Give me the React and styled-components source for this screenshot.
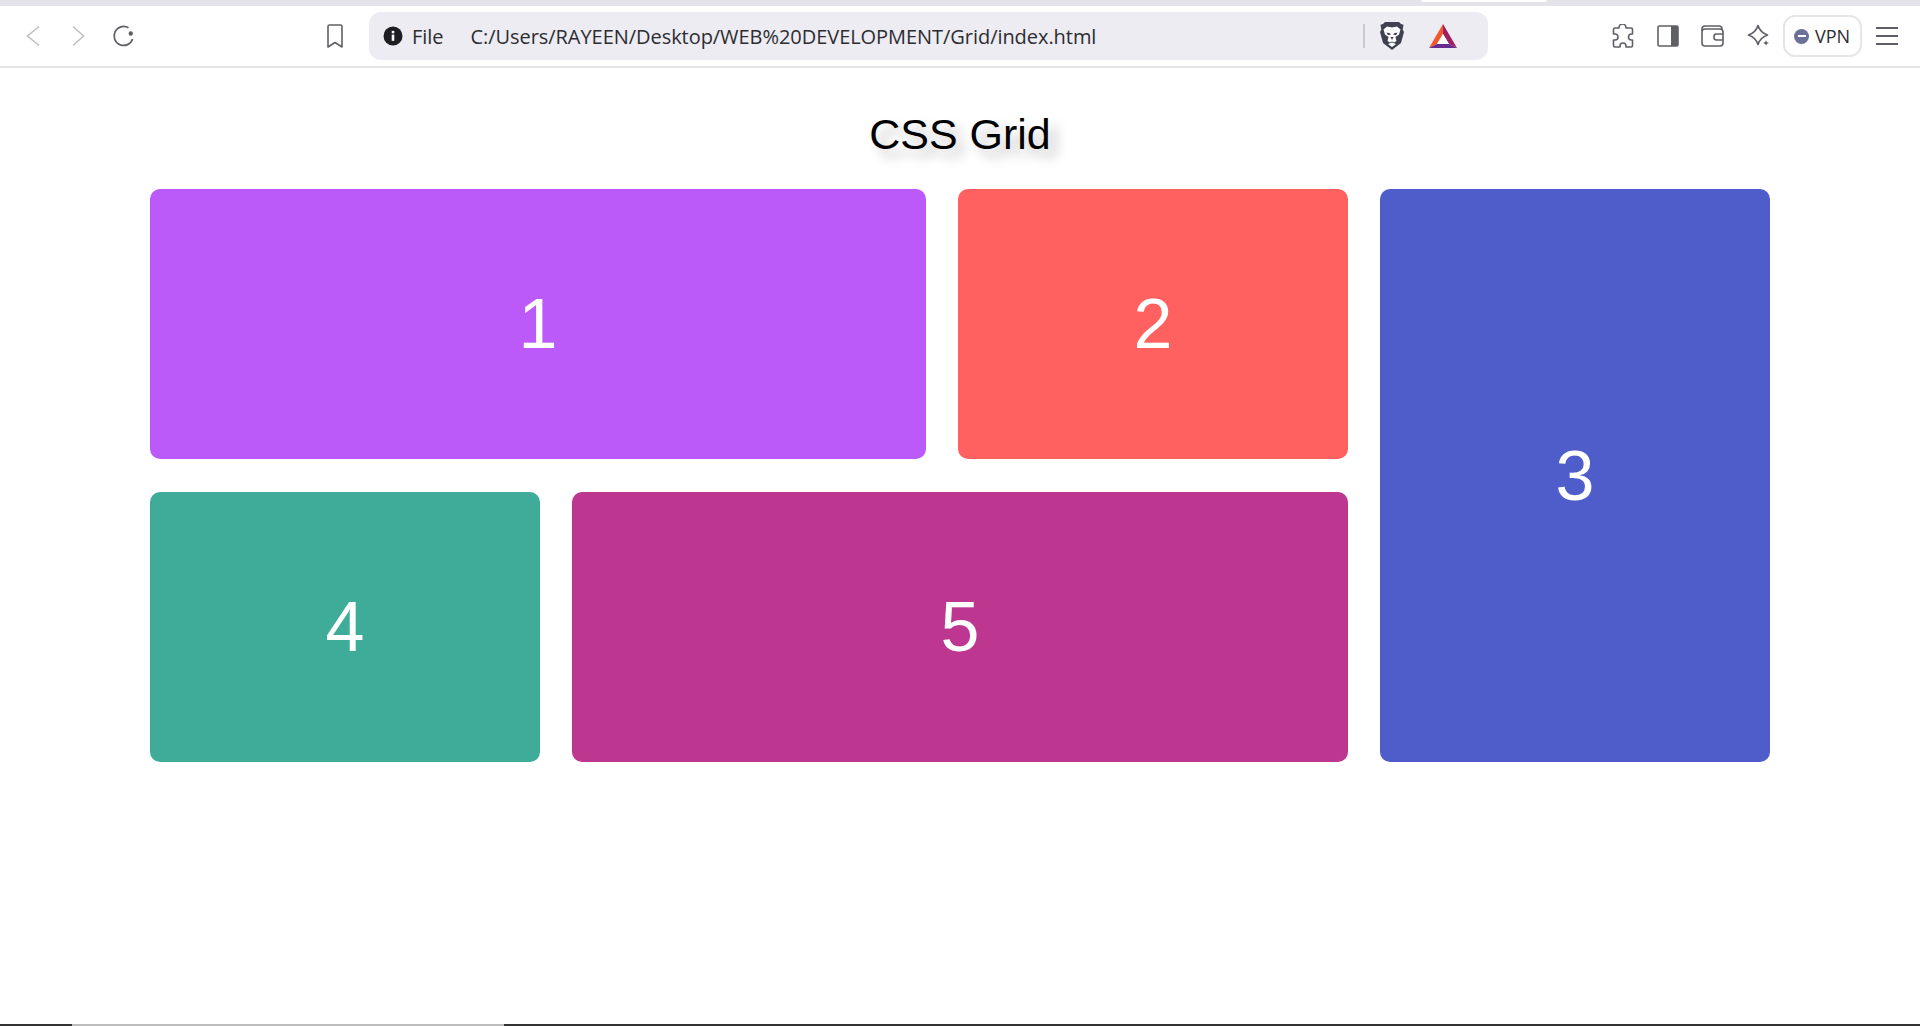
import React from "react";
import styled, { createGlobalStyle } from "styled-components";

const GlobalStyle = createGlobalStyle`
  html, body {
    margin: 0;
    height: 100%;
    background: #fff;
    overflow: hidden;
  }
  #root {
    height: 100%;
  }
`;

const BackIcon = () => (
  <svg width="16" height="24" viewBox="0 0 16 24" fill="none" stroke="#bdbdc2" strokeWidth="1.5">
    <path d="M13 2.500 1.500 12 13 21.500" />
  </svg>
);

const ForwardIcon = () => (
  <svg width="18" height="24" viewBox="0 0 18 24" fill="none" stroke="#bdbdc2" strokeWidth="1.5">
    <path d="M5 2.500 15.500 12 5 21.500" />
  </svg>
);

const ReloadIcon = () => (
  <svg width="24" height="24" viewBox="0 0 24 24" fill="none" stroke="#5f5f66" strokeWidth="1.7">
    <path d="M16.500 3.800A9.500 9.500 0 1 0 20.600 15" />
    <circle cx="18.800" cy="9.500" r="2.200" fill="#5f5f66" stroke="none" />
  </svg>
);

const BookmarkIcon = () => (
  <svg width="18" height="24" viewBox="0 0 18 24" fill="none" stroke="#5f5f66" strokeWidth="1.6" strokeLinejoin="round">
    <path d="M2 2.500A1.500 1.500 0 0 1 3.500 1h11A1.500 1.500 0 0 1 16 2.500V23l-7-4.500L2 23z" />
  </svg>
);

const InfoIcon = () => (
  <svg width="20" height="20" viewBox="0 0 20 20">
    <circle cx="10" cy="10" r="9.500" fill="#1d1d22" />
    <rect x="8.700" y="8.600" width="2.600" height="6.200" fill="#fff" />
    <rect x="8.700" y="4.900" width="2.600" height="2.400" fill="#fff" />
  </svg>
);

const BraveIcon = () => (
  <svg width="24" height="28" viewBox="0 0 24 28">
    <path d="M5 0h14l2 2 2.500.8-.8 5 1.300 2.200-3 11-6.500 5L12 28l-2.500-2-6.500-5-3-11 1.300-2.200-.8-5L3 2z" fill="#3f4150" />
    <path d="M3.500 7.500 7 4.500l5 1 5-1 3.500 3-1.500 5-3.500 2.500 1 4-2.500 1.500-2-1-2 1L7.500 19l1-4L5 12.500z" fill="#fff" />
    <path d="M6.500 10.500l3.500.8.800 1.200-2.800.8zM17.500 10.500l-3.500.8-.8 1.200 2.800.8z" fill="#3f4150" />
    <path d="M10.500 15h3L12 18z" fill="#3f4150" />
    <path d="M8 22 12 20.500 16 22l-4 3z" fill="#fff" />
  </svg>
);

const BatIcon = () => (
  <svg width="28" height="24" viewBox="0 0 28 24">
    <path d="M14 0v10L8 20 0 24z" fill="#f1592a" />
    <path d="M14 0l14 24-8-4-6-10z" fill="#9e1f63" />
    <path d="M0 24l8-4h12l8 4z" fill="#662d91" />
    <path d="M14 10l6 10H8z" fill="#fff" />
  </svg>
);

const PuzzleIcon = () => (
  <svg width="24" height="24" viewBox="0 0 24 24" fill="none" stroke="#5f5f66" strokeWidth="1.6" strokeLinejoin="round">
    <path d="M8 4V3.500a3.500 3.500 0 0 1 7 0V4h5a1.500 1.500 0 0 1 1.500 1.500V10h-1a3 3 0 0 0 0 6h1v5.500A1.500 1.500 0 0 1 20 23h-5v-1a3 3 0 0 0-6 0v1H4a1.500 1.500 0 0 1-1.500-1.500V16H4a3 3 0 0 0 0-6H2.500V5.500A1.500 1.500 0 0 1 4 4z" />
  </svg>
);

const SidebarIcon = () => (
  <svg width="22" height="22" viewBox="0 0 22 22">
    <rect x="1" y="1" width="20" height="20" rx="1.500" fill="none" stroke="#5f5f66" strokeWidth="1.600" />
    <path d="M14 1h6a1 1 0 0 1 1 1v18a1 1 0 0 1-1 1h-6z" fill="#5f5f66" />
  </svg>
);

const WalletIcon = () => (
  <svg width="24" height="22" viewBox="0 0 24 22" fill="none" stroke="#5f5f66" strokeWidth="1.6">
    <rect x="1" y="4" width="21" height="17" rx="3" />
    <path d="M1 6V4a3 3 0 0 1 3-3h14a3 3 0 0 1 3 3" />
    <path d="M22 9h-6.500a2.500 2.500 0 0 0-2.500 2.500v1a2.500 2.500 0 0 0 2.500 2.500H22" />
  </svg>
);

const SparkleIcon = () => (
  <svg width="24" height="24" viewBox="0 0 24 24">
    <path d="M11 1.500C12.500 6.500 15 9 20.500 11 15 13 12.500 15.500 11 20.500 9.500 15.500 7 13 1.500 11 7 9 9.500 6.500 11 1.500z" fill="none" stroke="#5f5f66" strokeWidth="1.700" strokeLinejoin="round" />
    <path d="M19 16c.4 1.800 1 2.500 3 3-2 .5-2.600 1.200-3 3-.4-1.800-1-2.500-3-3 2-.5 2.600-1.200 3-3z" fill="#5f5f66" />
  </svg>
);

const MenuIcon = () => (
  <svg width="24" height="20" viewBox="0 0 24 20" fill="none" stroke="#5f5f66" strokeWidth="1.800">
    <path d="M1 2h22M1 10h22M1 18h22" />
  </svg>
);

const App = () => {
  const cells = [
    { label: "1", color: "#bb5af8", col: "span 2" },
    { label: "2", color: "#ff6161", col: "span 1" },
    { label: "3", color: "#4e5dca", col: "span 1", row: "span 2" },
    { label: "4", color: "#3fac9a", col: "span 1" },
    { label: "5", color: "#bd368f", col: "span 2" },
  ];

  return (
    <Page>
      <GlobalStyle />
      <TabStrip>
        <ActiveTabEdge />
      </TabStrip>
      <Toolbar>
        <NavGroup>
          <BackIcon />
          <ForwardIcon />
          <ReloadIcon />
        </NavGroup>
        <BookmarkSlot>
          <BookmarkIcon />
        </BookmarkSlot>
        <AddressBar>
          <InfoIcon />
          <Scheme>File</Scheme>
          <Url>C:/Users/RAYEEN/Desktop/WEB%20DEVELOPMENT/Grid/index.html</Url>
          <Divider />
          <ShieldGroup>
            <BraveIcon />
            <BatIcon />
          </ShieldGroup>
        </AddressBar>
        <ActionGroup>
          <PuzzleIcon />
          <SidebarIcon />
          <WalletIcon />
          <SparkleIcon />
          <VpnButton>
            <VpnDot />
            VPN
          </VpnButton>
          <MenuIcon />
        </ActionGroup>
      </Toolbar>
      <Content>
        <Title>CSS Grid</Title>
        <Grid>
          {cells.map((cell) => (
            <Cell key={cell.label} $color={cell.color} $col={cell.col} $row={cell.row}>
              {cell.label}
            </Cell>
          ))}
        </Grid>
      </Content>
      <TaskEdge>
        <TaskEdgeDark $w="72px" />
        <TaskEdgeLight />
        <TaskEdgeDark $w="auto" $grow />
      </TaskEdge>
    </Page>
  );
};

export default App;

const Page = styled.div`
  height: 100%;
  display: flex;
  flex-direction: column;
  font-family: "Liberation Sans", Arial, sans-serif;
`;
const TabStrip = styled.div`
  height: 6px;
  display: flex;
  justify-content: flex-end;
  background: #e3e3e9;
`;
const ActiveTabEdge = styled.div`
  width: 126px;
  height: 2px;
  margin-right: 373px;
  background: #fff;
  border-radius: 0 0 5px 5px;
`;
const Toolbar = styled.div`
  height: 62px;
  box-sizing: border-box;
  display: flex;
  align-items: center;
  background: #fff;
  border-bottom: 2px solid #e4e4e6;
  padding-left: 26px;
`;
const NavGroup = styled.div`
  display: flex;
  align-items: center;
  gap: 26px;
`;
const BookmarkSlot = styled.div`
  display: flex;
  margin-left: 190px;
`;
const AddressBar = styled.div`
  width: 1119px;
  height: 48px;
  box-sizing: border-box;
  margin-left: 25px;
  display: flex;
  align-items: center;
  background: #edecf3;
  border-radius: 12px;
  padding: 0 31px 0 14px;
  color: #2c2c31;
  font-family: "Open Sans", sans-serif;
  font-size: 20px;
  letter-spacing: -0.05px;
`;
const Scheme = styled.span`
  margin-left: 9px;
`;
const Url = styled.span`
  margin-left: 27px;
  flex: 1;
`;
const Divider = styled.div`
  width: 2px;
  height: 24px;
  background: #c9c9ce;
  margin-right: 15px;
`;
const ShieldGroup = styled.div`
  display: flex;
  align-items: center;
  gap: 25px;
`;
const ActionGroup = styled.div`
  display: flex;
  align-items: center;
  margin-left: 123px;
  gap: 22px;
`;
const VpnButton = styled.div`
  display: flex;
  align-items: center;
  gap: 6px;
  width: 79px;
  height: 42px;
  box-sizing: border-box;
  margin: 0 -9px 0 -10px;
  padding-left: 9px;
  border: 2px solid #e6e6ea;
  border-radius: 12px;
  color: #2c2c31;
  font-family: "Open Sans", sans-serif;
  font-size: 18px;
`;
const VpnDot = styled.span`
  position: relative;
  width: 15px;
  height: 15px;
  border-radius: 50%;
  background: #6c7096;
  &::after {
    content: "";
    position: absolute;
    left: 3.5px;
    top: 6.5px;
    width: 8px;
    height: 2px;
    background: #fff;
  }
`;
const Content = styled.main`
  flex: 1;
  padding: 0 150px;
`;
const Title = styled.h1`
  margin: 0;
  height: 121px;
  box-sizing: border-box;
  padding-top: 12px;
  display: flex;
  align-items: center;
  justify-content: center;
  font-size: 43px;
  font-weight: 400;
  color: #000;
  text-shadow: 8px 8px 12px rgba(0, 0, 0, 0.25);
`;
const Grid = styled.div`
  display: grid;
  grid-template-columns: 390px 354px 390px 390px;
  grid-auto-rows: 270px;
  gap: 33px 32px;
`;
const Cell = styled.div`
  grid-column: ${(p) => p.$col};
  grid-row: ${(p) => p.$row || "auto"};
  display: flex;
  align-items: center;
  justify-content: center;
  background: ${(p) => p.$color};
  border-radius: 10px;
  color: #fff;
  font-size: 70px;
`;
const TaskEdge = styled.div`
  height: 2px;
  display: flex;
`;
const TaskEdgeDark = styled.div`
  width: ${(p) => p.$w};
  flex: ${(p) => (p.$grow ? 1 : "none")};
  background: #333;
`;
const TaskEdgeLight = styled.div`
  width: 432px;
  background: #bdbdbd;
`;
